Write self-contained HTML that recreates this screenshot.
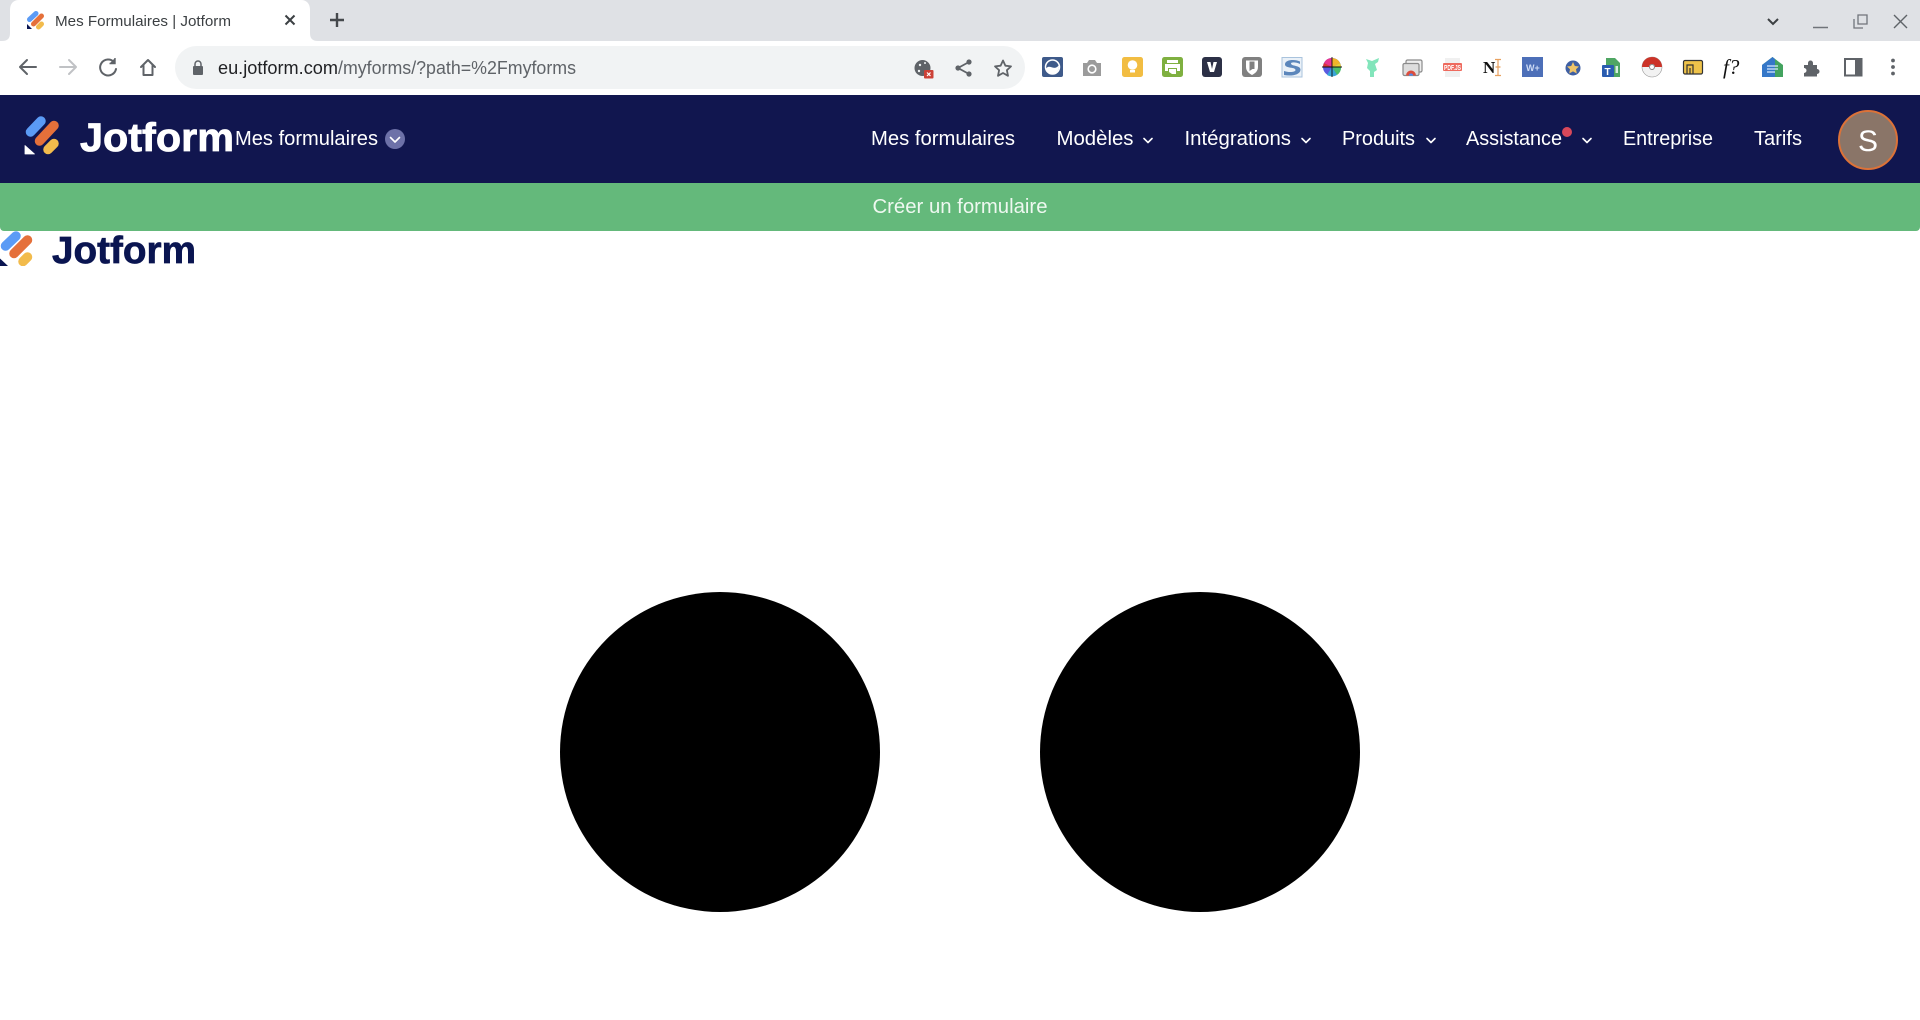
<!DOCTYPE html>
<html lang="fr">
<head>
<meta charset="utf-8">
<title>Mes Formulaires | Jotform</title>
<style>
html,body{margin:0;padding:0;background:#fff;width:1920px;height:1020px;overflow:hidden}
svg{display:block}
text{font-family:"Liberation Sans",sans-serif}
.soft{filter:blur(.35px)}
.nav{font-size:20px;fill:#fff}
.chev{fill:none;stroke:#fff;stroke-width:1.6;stroke-linecap:round;stroke-linejoin:round}
.tb{fill:none;stroke-width:2;stroke-linecap:round;stroke-linejoin:round}
</style>
</head>
<body>
<svg width="1920" height="1020" viewBox="0 0 1920 1020" xmlns="http://www.w3.org/2000/svg">
<rect width="1920" height="1020" fill="#fff"/>
<rect width="1920" height="41" fill="#dfe1e5"/>
<rect y="95" width="1920" height="88" fill="#11164f"/>
<path d="M0 183H1920V227A4 4 0 0 1 1916 231H4A4 4 0 0 1 0 227Z" fill="#64b97b"/>
<g class="soft">
<!-- Tab strip -->
<path d="M2 41C8 41 10 38 10 33V10C10 4 13 0 19 0H301C307 0 310 4 310 10V33C310 38 312 41 318 41Z" fill="#fff"/>
<g stroke-linecap="round" fill="none" stroke-width="5">
<path d="M29.500 19.500L36 13.500" stroke="#5b9bf5"/>
<path d="M33.500 24L41.500 16" stroke="#e5703a"/>
<path d="M38.500 27L41.500 24" stroke="#f2bb4c"/>
</g>
<path d="M27 24V29H32Z" fill="#0a1551"/>
<text x="55" y="26" font-size="15" fill="#3c4043" textLength="176" lengthAdjust="spacingAndGlyphs">Mes Formulaires | Jotform</text>
<path d="M285.500 15.500L294.500 24.500M294.500 15.500L285.500 24.500" stroke="#3c4043" stroke-width="2" fill="none"/>
<path d="M337 13V27M330 20H344" stroke="#45484c" stroke-width="2.400" fill="none"/>
<!-- Window controls -->
<path d="M1768 19L1773 24L1778 19" stroke="#3c4043" stroke-width="2" fill="none"/>
<path d="M1813 27.500H1828" stroke="#70747a" stroke-width="1.500"/>
<path d="M1858 15H1867V24H1858ZM1854 19V28H1863" stroke="#70747a" stroke-width="1.300" fill="none"/>
<path d="M1894 15L1907 28M1907 15L1894 28" stroke="#5f6368" stroke-width="1.400" fill="none"/>

<!-- Toolbar -->
<path d="M20 67H36M20 67L27 60M20 67L27 74" class="tb" stroke="#5f6368"/>
<path d="M76 67H60M76 67L69 60M76 67L69 74" class="tb" stroke="#c0c2c5"/>
<path d="M114 62A8 8 0 1 0 116 69" class="tb" stroke="#5f6368"/>
<path d="M115 58V63.500H109.500" fill="#5f6368" stroke="#5f6368" stroke-width="1.400"/>
<path d="M141 67L148 60L155 67M143.500 65.500V75H152.500V65.500" class="tb" stroke="#5f6368"/>
<rect x="175" y="46" width="850" height="43" rx="21.500" fill="#f1f3f4"/>
<rect x="193" y="66" width="10" height="9" rx="1" fill="#5f6368"/>
<path d="M195 66V64A3 3 0 0 1 201 64V66" fill="none" stroke="#5f6368" stroke-width="1.500"/>
<text x="218" y="74" font-size="18" fill="#202124" textLength="120" lengthAdjust="spacingAndGlyphs">eu.jotform.com</text>
<text x="338" y="74" font-size="18" fill="#5f6368" textLength="238" lengthAdjust="spacingAndGlyphs">/myforms/?path=%2Fmyforms</text>
<!-- cookie / share / star -->
<circle cx="922.500" cy="68" r="8" fill="#5f6368"/>
<circle cx="920" cy="65" r="1.200" fill="#f1f3f4"/><circle cx="925" cy="63" r="1" fill="#f1f3f4"/><circle cx="919" cy="71" r="1.200" fill="#f1f3f4"/>
<rect x="924" y="70" width="9.500" height="8.500" rx="1" fill="#cc4137"/>
<path d="M927 72.500L930.500 76M930.500 72.500L927 76" stroke="#fff" stroke-width="1.200"/>
<path d="M969 62L958 68L969 74" fill="none" stroke="#5f6368" stroke-width="1.800"/>
<circle cx="969" cy="62" r="2.600" fill="#5f6368"/><circle cx="958" cy="68" r="2.600" fill="#5f6368"/><circle cx="969" cy="74" r="2.600" fill="#5f6368"/>
<path d="M1003 60.500L1005.400 65.700L1011 66.400L1006.900 70.200L1008 75.800L1003 73L998 75.800L999.100 70.200L995 66.400L1000.600 65.700Z" fill="none" stroke="#5f6368" stroke-width="1.800" stroke-linejoin="round"/>

<!-- Extensions -->
<rect x="1042" y="57" width="21" height="20" rx="2" fill="#3e5a8a"/>
<circle cx="1052.500" cy="67" r="7" fill="none" stroke="#fff" stroke-width="1.500"/>
<path d="M1046 69C1049 63 1054 72 1059 65C1059 72 1055 74 1052 74C1049 74 1047 72 1046 69Z" fill="#fff"/>

<path d="M1083 63H1087L1089 60H1095L1097 63H1101V76H1083Z" fill="#9b9b9b"/>
<circle cx="1092" cy="69" r="3.800" fill="#9b9b9b" stroke="#fff" stroke-width="1.600"/>

<rect x="1122" y="57" width="21" height="20" rx="2.500" fill="#f2bd42"/>
<circle cx="1132.500" cy="65" r="4.800" fill="#fff"/>
<rect x="1130" y="70" width="5" height="2.500" fill="#fff"/>

<rect x="1162" y="57" width="21" height="20" rx="2.500" fill="#7fb040"/>
<path d="M1167 60H1178V63H1167ZM1165 64H1180V71H1177V68H1168V71H1165ZM1169 69H1176V74H1172L1169 72Z" fill="#fff"/>

<rect x="1202" y="57" width="20" height="20" rx="3" fill="#2c3046"/>
<path d="M1207 62H1210.500L1212 69L1213.500 62H1217L1214 72H1210Z" fill="#fff"/>

<rect x="1242" y="57" width="20" height="20" rx="3" fill="#808080"/>
<path d="M1246 60.500H1258V67C1258 71 1255 73.500 1252 75C1249 73.500 1246 71 1246 67Z" fill="#fff"/>
<path d="M1249.500 61.500H1254.500V69H1252.500L1249.500 71Z" fill="#808080"/>

<rect x="1282" y="57.500" width="20" height="19.500" fill="#eaf1f8" stroke="#a9c3dd"/>
<path d="M1300 61.500C1295 59 1285.500 59.500 1285 64C1284.500 69 1295.500 66.500 1295.500 70C1295.500 72.500 1288 72.500 1284 71V75C1291 76.500 1300 75 1300.500 70C1301 65 1291 66.500 1291 63.500C1291 62 1296 62 1300 64Z" fill="#5b86bb"/>

<circle cx="1332" cy="67" r="9" fill="#5b5be0"/>
<path d="M1332 67V58A9 9 0 0 1 1340 63Z" fill="#f0b429"/><path d="M1332 67L1340 63A9 9 0 0 1 1341 67Z" fill="#e8d030"/>
<path d="M1332 67H1341A9 9 0 0 1 1337 75Z" fill="#4bbf6b"/><path d="M1332 67L1337 75A9 9 0 0 1 1327 75Z" fill="#38a6d8"/>
<path d="M1332 67V58A9 9 0 0 0 1324 63Z" fill="#e8368f"/><path d="M1332 67L1324 63A9 9 0 0 0 1323 67Z" fill="#e0343a"/>
<path d="M1322 67H1342M1332 57V77" stroke="#111" stroke-width="0.900"/>

<path d="M1366 59L1372 61L1379 58L1378 62L1375 64L1377 70L1374 72L1374 77H1370V71L1367 68L1368 63Z" fill="#82e5bb"/>

<rect x="1406" y="60" width="16" height="12" rx="1.500" fill="#eee" stroke="#8a8a8a" stroke-width="1.200"/>
<rect x="1403" y="63.500" width="16" height="12" rx="1.500" fill="#ddd" stroke="#8a8a8a" stroke-width="1.200"/>
<path d="M1406 75.500A5 5 0 0 1 1416 75.500Z" fill="#dc4d3e"/>
<path d="M1409 75.500A2 2 0 0 1 1413 75.500Z" fill="#4a8af4"/>

<rect x="1445" y="58" width="15" height="19" fill="#f0f0f0"/>
<rect x="1443" y="63" width="19" height="8" rx="1" fill="#ee6a5e"/>
<text x="1444" y="70" font-size="7" font-weight="bold" fill="#fff" textLength="17" lengthAdjust="spacingAndGlyphs">PDF.JS</text>

<text x="1483" y="73" font-size="17" fill="#111" font-weight="bold" style="font-family:'Liberation Serif',serif">N</text>
<path d="M1495 59.500H1501M1498 59.500V75.500M1495 75.500H1501M1495.500 67H1500.500" fill="none" stroke="#e8a15f" stroke-width="1.200"/>

<rect x="1522" y="57" width="21" height="20" fill="#4d6fb8"/>
<text x="1526" y="71" font-size="9" fill="#cfdcf5" font-weight="bold">W+</text>

<circle cx="1573" cy="68" r="7.500" fill="#3e5fa3"/>
<path d="M1573 62L1574.800 66L1579 66.500L1576 69.300L1576.800 73.500L1573 71.400L1569.200 73.500L1570 69.300L1567 66.500L1571.200 66Z" fill="#eec468"/>

<path d="M1606 58H1615L1620 63V77H1606Z" fill="#4fa663"/>
<rect x="1602" y="65" width="12" height="12" rx="1" fill="#2a5cb0"/>
<text x="1604.500" y="75" font-size="10" fill="#fff" font-weight="bold">T</text>
<rect x="1615.500" y="66" width="2.500" height="7" fill="#d8f0de"/>

<circle cx="1652" cy="67" r="10" fill="#f2f2f2" stroke="#999" stroke-width="0.600"/>
<path d="M1642 67A10 10 0 0 1 1662 67H1655A3 3 0 0 0 1649 67Z" fill="#cc3328"/>
<circle cx="1652" cy="67" r="2.500" fill="#fff" stroke="#888"/>

<rect x="1683.500" y="60.500" width="19" height="13.500" rx="1.500" fill="#efc34a" stroke="#333" stroke-width="1.200"/>
<path d="M1687 74V65H1693V74M1690 74V68" fill="none" stroke="#333" stroke-width="1.200"/>

<text x="1723" y="74" font-size="21" fill="#111" font-style="italic" style="font-family:'Liberation Serif',serif">f?</text>

<path d="M1772.500 57L1783 65V77H1762V65Z" fill="#43a35f"/>
<path d="M1772.500 57L1762 65V77H1775V59Z" fill="#3577c8"/>
<path d="M1767 66H1778M1767 69H1778M1767 72H1775" stroke="#d8e8ff" stroke-width="1.200"/>

<path d="M1804 65H1808V63A2.500 2.500 0 0 1 1813 63V65H1817V69A2.500 2.500 0 0 1 1817 74V76.500H1804V73A2.500 2.500 0 0 0 1804 68Z" fill="#5f6368"/>

<rect x="1845" y="59" width="16.500" height="16.500" fill="none" stroke="#5f6368" stroke-width="2"/>
<rect x="1855" y="59" width="6.500" height="16.500" fill="#5f6368"/>

<circle cx="1893" cy="60.500" r="1.900" fill="#5f6368"/><circle cx="1893" cy="67" r="1.900" fill="#5f6368"/><circle cx="1893" cy="73.500" r="1.900" fill="#5f6368"/>

<!-- Navy bar content -->
<g fill="none" stroke-linecap="round" stroke-width="9.500">
<path d="M30.500 132L41 121" stroke="#5b9bf5"/>
<path d="M39.500 141L54 125.500" stroke="#e5703a"/>
<path d="M48 149.500L54 143.500" stroke="#f2bb4c"/>
</g>
<path d="M25 145.500V154H34.500Z" fill="#fff" stroke="#fff" stroke-width="0.800" stroke-linejoin="round"/>
<text x="80" y="151" font-size="40" font-weight="bold" fill="#fff" stroke="#fff" stroke-width="0.800" textLength="154" lengthAdjust="spacingAndGlyphs">Jotform</text>
<text x="235" y="145" class="nav" textLength="143" lengthAdjust="spacingAndGlyphs">Mes formulaires</text>
<circle cx="395" cy="139" r="10" fill="#6d71a8"/>
<path d="M390.500 137.500L395 142L399.500 137.500" class="chev" stroke-width="1.400"/>

<text x="871" y="145" class="nav" textLength="144" lengthAdjust="spacingAndGlyphs">Mes formulaires</text>
<text x="1056.500" y="145" class="nav" textLength="77" lengthAdjust="spacingAndGlyphs">Modèles</text>
<path d="M1144 138.500L1148 142.500L1152 138.500" class="chev"/>
<text x="1184.500" y="145" class="nav" textLength="106.500" lengthAdjust="spacingAndGlyphs">Intégrations</text>
<path d="M1302 138.500L1306 142.500L1310 138.500" class="chev"/>
<text x="1342" y="145" class="nav" textLength="73" lengthAdjust="spacingAndGlyphs">Produits</text>
<path d="M1427 138.500L1431 142.500L1435 138.500" class="chev"/>
<text x="1466" y="145" class="nav" textLength="96" lengthAdjust="spacingAndGlyphs">Assistance</text>
<circle cx="1567" cy="132" r="5" fill="#d9485a"/>
<path d="M1583 138.500L1587 142.500L1591 138.500" class="chev"/>
<text x="1623" y="145" class="nav" textLength="90" lengthAdjust="spacingAndGlyphs">Entreprise</text>
<text x="1754" y="145" class="nav" textLength="48" lengthAdjust="spacingAndGlyphs">Tarifs</text>
<circle cx="1868" cy="140" r="29" fill="#8a7568" stroke="#dc7238" stroke-width="2"/>
<text x="1868" y="151" font-size="30" fill="#fff" text-anchor="middle">S</text>

<!-- Green bar text -->
<text x="872.500" y="213" font-size="20" fill="#eef8f0" textLength="175" lengthAdjust="spacingAndGlyphs">Créer un formulaire</text>

<!-- Clipped lower logo -->
<svg x="0" y="231" width="200" height="35" viewBox="0 231 200 35">
<g fill="none" stroke-linecap="round" stroke-width="9.500">
<path d="M5.500 246L16 236" stroke="#5b9bf5"/>
<path d="M14 253.500L27.500 240" stroke="#e5703a"/>
<path d="M23 261.500L27.500 257" stroke="#f2bb4c"/>
</g>
<path d="M0 258.500V266H8Z" fill="#0a1551"/>
<text x="52" y="263" font-size="38" font-weight="bold" fill="#0a1551" stroke="#0a1551" stroke-width="0.700" textLength="144" lengthAdjust="spacingAndGlyphs">Jotform</text>
</svg>
</g>

<!-- Circles -->
<circle cx="720" cy="752" r="160" fill="#000"/>
<circle cx="1200" cy="752" r="160" fill="#000"/>
</svg>
</body>
</html>
